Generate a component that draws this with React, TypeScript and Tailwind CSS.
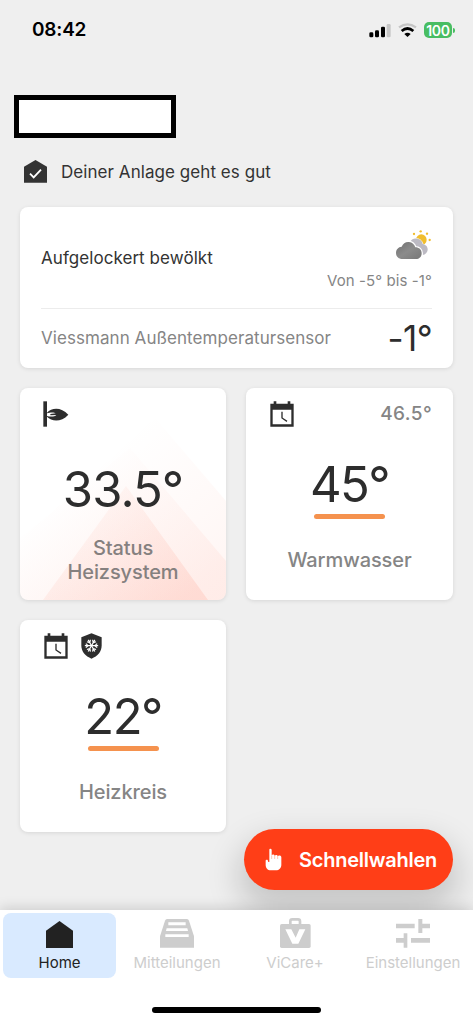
import React from "react";

// ==== Icons ====
const SignalIcon = () => (
  <svg width="22" height="15" viewBox="0 0 66 45">
    <rect x="1" y="28" width="12" height="15" rx="4" />
    <rect x="18" y="22" width="12" height="21" rx="4" />
    <rect x="36" y="11" width="12" height="32" rx="4" />
    <rect x="53" y="3" width="12" height="40" rx="4" fill="#c6c6c6" />
  </svg>
);

const WifiIcon = () => (
  <svg width="19" height="14" viewBox="0 0 57 42" fill="none" strokeWidth="7">
    <path d="M3 13 Q28.500 -5 54 13" stroke="#c6c6c6" />
    <path d="M11 24 Q28.500 9 46 24" stroke="#000" strokeWidth="8" />
    <path d="M19 33 Q28.500 25 38 33 L28.500 42 Z" fill="#000" />
  </svg>
);

const HouseCheckIcon = () => (
  <svg width="23" height="23" viewBox="0 0 69 69">
    <path d="M34.500 0 L69 20 V68 H0 V20 Z" fill="#333" />
    <path d="M18 41 L29 52 L51 29" fill="none" stroke="#fff" strokeWidth="5.500" />
  </svg>
);

const WeatherIcon = () => (
  <svg width="37" height="31" viewBox="0 0 111 93">
    <defs>
      <linearGradient id="cloud" x1="0" y1="0" x2="1" y2="1">
        <stop offset="0" stopColor="#6f6f6f" />
        <stop offset="0.5" stopColor="#8b8b8b" />
        <stop offset="1" stopColor="#777" />
      </linearGradient>
    </defs>
    <g fill="#f0bd2d">
      <circle cx="79" cy="32" r="16" />
      <circle cx="77" cy="7" r="3.500" />
      <circle cx="96" cy="14" r="3.500" />
      <circle cx="57" cy="15" r="3.500" />
      <circle cx="104" cy="33" r="3.500" />
    </g>
    <path
      d="M44 42 C48 31 57 27 67 29 C77 31 82 37 83 45 C93 47 99 54 98 63 C97 70 91 77 83 78 Z"
      fill="#bcbac3"
      stroke="#fff"
      strokeWidth="3"
      paintOrder="stroke"
    />
    <path
      d="M22 90 C10 90 3 82 3 72 C3 61 10 54 20 53 C24 43 32 38 42 39 C52 40 58 46 61 55 C72 55 80 62 80 73 C80 83 73 90 63 90 Z"
      fill="url(#cloud)"
      stroke="#fff"
      strokeWidth="8"
      paintOrder="stroke"
    />
  </svg>
);

const BurnerIcon = () => (
  <svg width="26" height="26" viewBox="0 0 78 78" fill="#2d2d2d">
    <rect x="1" y="1" width="11" height="76" />
    <path d="M12 35 C26 20 54 17 76 41 C54 65 26 62 12 47 V45 C22 48 36 47 40 42 L22 43 V39 L38 37 C34 33 20 34 12 37 Z" />
  </svg>
);

const CalendarIcon = () => (
  <svg width="24" height="26" viewBox="0 0 72 78">
    <path d="M1 8 H11 V1 H19 V8 H53 V1 H61 V8 H71 V77 H1 Z M8 26 V70 H64 V26 Z" fill="#2d2d2d" fillRule="evenodd" />
    <path d="M36 32 V51 L51 61" fill="none" stroke="#2d2d2d" strokeWidth="4" />
  </svg>
);

const FrostShieldIcon = () => (
  <svg width="21" height="26" viewBox="0 0 63 78">
    <path d="M31.500 1 L62 13 V37 C62 56 50 70 31.500 77 C13 70 1 56 1 37 V13 Z" fill="#2d2d2d" />
    <g fill="none" stroke="#fff" strokeWidth="3.500">
      {[0, 60, 120].map((deg) => (
        <path
          key={deg}
          d="M31.500 18 V58 M25.500 21 L31.500 28 L37.500 21 M25.500 55 L31.500 48 L37.500 55"
          transform={`rotate(${deg + 30} 31.500 38)`}
        />
      ))}
    </g>
  </svg>
);

const HandIcon = () => (
  <svg width="17" height="23" viewBox="0 0 51 69" fill="#fff">
    <path d="M13 5 C13 1 19 1 20 5 V21 C23 18 28 19 29 23 C32 20 37 21 38 24 C42 21 49 22 49 28 V50 C49 60 42 67 33 67 H17 C8 67 2 60 2 51 V38 C2 35 6 34 8 36 L10 42 H13 Z" />
    <path d="M20 22 V33 M29 23 V33 M38 24 V33" stroke="#ff8a6a" strokeWidth="1.500" fill="none" />
  </svg>
);

const HomeIcon = () => (
  <svg width="27" height="27" viewBox="0 0 81 81" fill="#222">
    <path d="M40.500 0 L81 29 V81 H0 V29 Z" />
  </svg>
);

const InboxIcon = () => (
  <svg width="34" height="29" viewBox="0 0 102 87">
    <path d="M21 0 H81 Q85 0 87 5 L102 52 V86 H0 V52 L15 5 Q17 0 21 0 Z" fill="#cdcdcd" />
    <path d="M25 10 H77 V19 H25 Z M20 28 H82 L84 36 H18 Z M16 46 H86 V54 H16 Z" fill="#fff" />
  </svg>
);

const BagIcon = () => (
  <svg width="31" height="30" viewBox="0 0 93 90">
    <path d="M31 20 V10 Q31 4 37 4 H54 Q60 4 60 10 V20" fill="none" stroke="#cdcdcd" strokeWidth="8" />
    <rect x="0" y="18" width="92" height="72" rx="5" fill="#cdcdcd" />
    <path d="M16 34 H34 L47 59 L58 34 H76 L55 77 H37 Z" fill="#fff" />
  </svg>
);

const SlidersIcon = () => (
  <svg width="34" height="29" viewBox="0 0 102 87" fill="#cdcdcd">
    <path d="M0 14 H56 V28 H0 Z M67 0 H79 V14 H102 V28 H79 V42 H67 Z" />
    <path d="M0 57 H23 V43 H34 V86 H23 V71 H0 Z M45 57 H102 V71 H45 Z" />
  </svg>
);

// ==== Data ====
const tabs = [
  { label: "Home", icon: <HomeIcon />, active: true },
  { label: "Mitteilungen", icon: <InboxIcon />, active: false },
  { label: "ViCare+", icon: <BagIcon />, active: false },
  { label: "Einstellungen", icon: <SlidersIcon />, active: false },
];

// ==== Cards ====
type TileProps = {
  icons: React.ReactNode;
  value: string;
  label: string;
  aside?: string;
};

const Tile: React.FC<TileProps> = ({ icons, value, label, aside }) => (
  <section className="flex h-[212px] flex-col rounded-lg bg-white px-5 pt-[13px] shadow-[0_1px_4px_rgba(0,0,0,0.1)]">
    <div className="flex h-[26px] items-center justify-between">
      <div className="flex gap-[13px] pl-1">{icons}</div>
      {aside && <span className="pr-px text-[19px] font-medium tracking-[0.4px] text-[#858585]">{aside}</span>}
    </div>
    <div className="mt-[28px] text-center text-[49px] leading-[60px] tracking-[-1.6px] text-[#2d2d2d]">{value}</div>
    <div className="mx-auto -mt-px h-[5px] w-[71px] rounded-full bg-[#f5924e]" />
    <div className="mt-[29px] text-center text-[20px] font-medium leading-6 tracking-[-0.1px] text-[#858585]">{label}</div>
  </section>
);

const HeatTile = () => (
  <section className="relative h-[212px] overflow-hidden rounded-lg bg-white px-5 pt-[13px] shadow-[0_1px_4px_rgba(0,0,0,0.1)]">
    <svg className="absolute inset-0" width="206" height="212" viewBox="0 0 206 212">
      <defs>
        <linearGradient id="heatBack" gradientUnits="userSpaceOnUse" x1="70" y1="80" x2="190" y2="212">
          <stop offset="0" stopColor="#ff3e17" stopOpacity="0" />
          <stop offset="1" stopColor="#ff3e17" stopOpacity="0.05" />
        </linearGradient>
        <linearGradient id="heatMid" gradientUnits="userSpaceOnUse" x1="50" y1="90" x2="160" y2="212">
          <stop offset="0" stopColor="#ff3e17" stopOpacity="0" />
          <stop offset="1" stopColor="#ff3e17" stopOpacity="0.05" />
        </linearGradient>
        <linearGradient id="heatFront" gradientUnits="userSpaceOnUse" x1="80" y1="98" x2="160" y2="212">
          <stop offset="0" stopColor="#ff3e17" stopOpacity="0.03" />
          <stop offset="1" stopColor="#ff3e17" stopOpacity="0.1" />
        </linearGradient>
      </defs>
      <path d="M135 30 L0 130 V212 H206 V113 Z" fill="url(#heatBack)" />
      <path d="M110 60 L0 150 V212 H206 V173 Z" fill="url(#heatMid)" />
      <path d="M106 98 L188 212 H23 Z" fill="url(#heatFront)" />
    </svg>
    <div className="relative">
      <div className="pl-[3px]">
        <BurnerIcon />
      </div>
      <div className="mt-[33px] text-center text-[49px] leading-[60px] tracking-[-0.9px] text-[#2d2d2d]">33.5°</div>
      <div className="mt-4 text-center text-[20px] font-medium leading-6 tracking-[-0.1px] text-[#85807f]">
        Status
        <br />
        Heizsystem
      </div>
    </div>
  </section>
);

export default function App() {
  return (
    <div className="relative flex h-[1024px] w-[473px] flex-col overflow-hidden bg-[#efefef] font-['Inter','Liberation_Sans',sans-serif] text-[#333]">
      {/* status bar */}
      <header className="flex h-[60px] items-center justify-between pl-8 pr-[18px]">
        <span className="text-[19px] font-semibold tracking-[-0.2px] text-black">08:42</span>
        <div className="flex items-center gap-[7px]">
          <SignalIcon />
          <WifiIcon />
          <div className="flex items-center gap-px">
            <div className="flex h-4 w-[28px] items-center justify-center rounded-[5px] bg-[#48bd62] text-[14px] font-semibold tracking-[-0.3px] text-white">100</div>
            <div className="h-[5px] w-[2px] rounded-r-full bg-[#48bd62]" />
          </div>
        </div>
      </header>

      <div className="ml-[14px] mt-[35px] h-[43px] w-[162px] border-[5px] border-black bg-white" />

      <div className="mt-[22px] flex h-[23px] items-center gap-[14px] pl-6">
        <HouseCheckIcon />
        <span className="pt-[2px] text-[17px] tracking-[0.06px]">Deiner Anlage geht es gut</span>
      </div>

      <main className="mt-6 px-5">
        {/* weather */}
        <section className="h-[161px] rounded-lg bg-white px-[21px] shadow-[0_1px_4px_rgba(0,0,0,0.1)]">
          <div className="flex h-[102px] items-center justify-between border-b border-[#ececec]">
            <span className="pt-[2px] text-[17px] tracking-[0.06px]">Aufgelockert bewölkt</span>
            <div className="flex flex-col items-end pt-1">
              <WeatherIcon />
              <span className="mt-[11px] text-[15px] leading-5 tracking-[0.1px] text-[#858585]">Von -5° bis -1°</span>
            </div>
          </div>
          <div className="flex h-[59px] items-center justify-between">
            <span className="text-[17px] tracking-[0.06px] text-[#858585]">Viessmann Außentemperatursensor</span>
            <span className="text-[35px] leading-none tracking-[-0.6px] text-[#2d2d2d]">-1°</span>
          </div>
        </section>

        <div className="mt-5 grid grid-cols-[206px_207px] gap-5">
          <HeatTile />
          <Tile icons={<CalendarIcon />} value="45°" label="Warmwasser" aside="46.5°" />
          <Tile
            icons={
              <>
                <CalendarIcon />
                <FrostShieldIcon />
              </>
            }
            value="22°"
            label="Heizkreis"
          />
        </div>
      </main>

      {/* quick actions */}
      <button className="absolute left-[244px] top-[829px] flex h-[61px] w-[209px] items-center gap-[17px] rounded-full bg-[#ff3e17] pl-[21px] text-[20px] font-semibold tracking-[-0.25px] text-white shadow-[0_16px_32px_6px_rgba(0,0,0,0.17)]">
        <HandIcon />
        Schnellwahlen
      </button>

      {/* tab bar */}
      <nav className="relative mt-auto flex h-[114px] flex-col items-center bg-white shadow-[0_-2px_12px_rgba(0,0,0,0.15)]">
        <div className="flex w-full pl-[3px] pt-[3px]">
          {tabs.map((tab) => (
            <div
              key={tab.label}
              className={
                tab.active
                  ? "mr-[2px] flex h-[65px] w-[113px] flex-col items-center rounded-lg bg-[#d9eaff] text-[#222]"
                  : "flex h-[65px] w-[118px] flex-col items-center text-[#cdcdcd]"
              }
            >
              <div className="flex h-[38px] items-end justify-center pb-[3px]">{tab.icon}</div>
              <span className="text-[15px] leading-[24px]">{tab.label}</span>
            </div>
          ))}
        </div>
        <div className="mt-[29px] h-[6px] w-[169px] rounded-full bg-black" />
      </nav>
    </div>
  );
}
